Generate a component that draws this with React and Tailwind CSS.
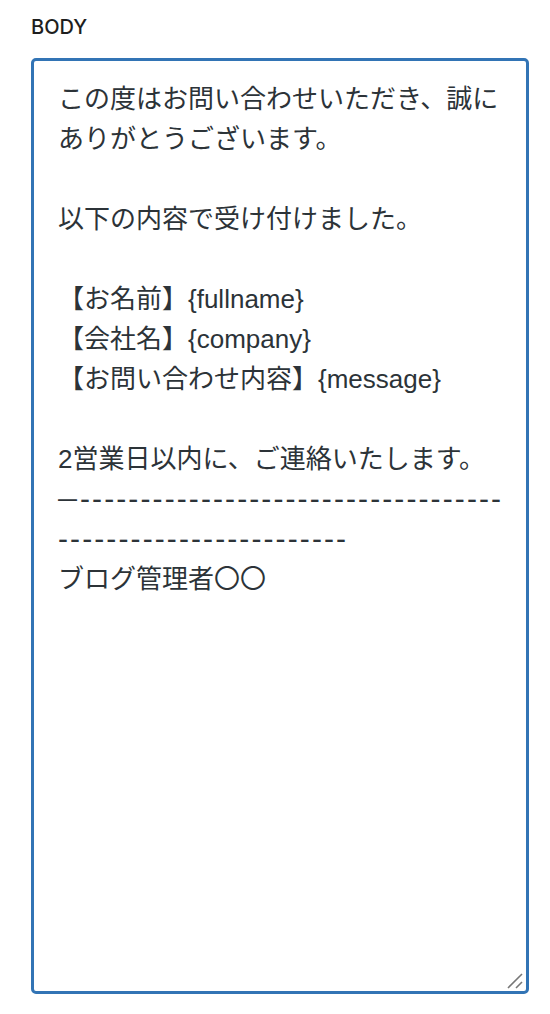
export default function App() {
  const lines = [
    "この度はお問い合わせいただき、誠に",
    "ありがとうございます。",
    "",
    "以下の内容で受け付けました。",
    "",
    "【お名前】{fullname}",
    "【会社名】{company}",
    "【お問い合わせ内容】{message}",
    "",
    "2営業日以内に、ご連絡いたします。",
  ];
  const hy1 = "-".repeat(35);
  const hy2 = "-".repeat(24);
  return (
    <div
      className="min-h-[1014px] bg-white pl-[31px] pt-[13px]"
      style={{ fontFamily: '"Liberation Sans", "Noto Sans CJK JP", sans-serif' }}
    >
      <div
        className="mb-[17px] text-[20px] font-medium leading-[28px] text-[#1e1e1e]"
        style={{ fontFamily: 'Inter, "Liberation Sans", sans-serif' }}
      >
        BODY
      </div>
      <div className="relative h-[936px] w-[498px] rounded-[5px] border-[3px] border-[#3274b5] bg-white pl-[24px] pt-[18px] text-[26px] leading-[40px] text-[#2c3338]">
        {lines.map((l, i) => (
          <div key={i} className="h-[40px] whitespace-pre">
            {l}
          </div>
        ))}
        <div className="h-[40px] whitespace-pre">
          <span className="align-[4px] text-[19px] font-bold tracking-[3px]">—</span>
          <span className="text-[30px] tracking-[2.1px]">{hy1}</span>
        </div>
        <div className="h-[40px] whitespace-pre">
          <span className="text-[30px] tracking-[2.1px]">{hy2}</span>
        </div>
        <div className="h-[40px] whitespace-pre">ブログ管理者〇〇</div>
        <svg
          className="absolute bottom-[1px] right-[1px]"
          width="20"
          height="20"
          viewBox="0 0 20 20"
        >
          <line x1="3" y1="18" x2="17" y2="4" stroke="#777" strokeWidth="1.6" />
          <line x1="11" y1="18" x2="17" y2="12" stroke="#777" strokeWidth="1.6" />
        </svg>
      </div>
    </div>
  );
}
